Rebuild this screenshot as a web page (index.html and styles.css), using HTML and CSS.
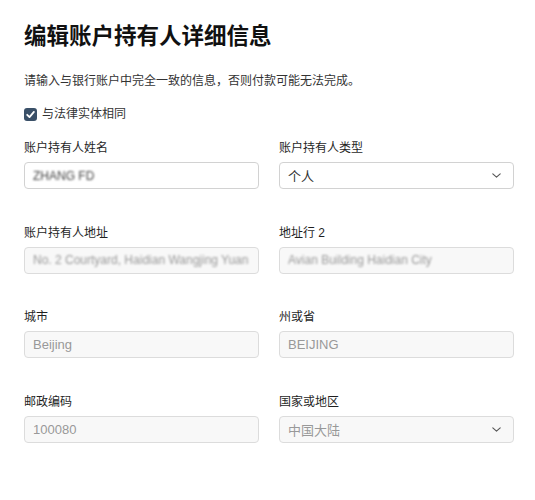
FILE: index.html
```html
<!DOCTYPE html>
<html lang="zh-CN">
<head>
<meta charset="utf-8">
<title>编辑账户持有人详细信息</title>
<link rel="stylesheet" href="styles.css">
</head>
<body>
<main class="page">
  <h1 class="title">编辑账户持有人详细信息</h1>
  <p class="intro">请输入与银行账户中完全一致的信息，否则付款可能无法完成。</p>
  <label class="check">
    <span class="box"><svg viewBox="0 0 13 13" width="13" height="13"><path d="M3.2 6.8 L5.5 9.1 L9.9 3.9" fill="none" stroke="#fff" stroke-width="1.8" stroke-linecap="round" stroke-linejoin="round"/></svg></span>
    <span>与法律实体相同</span>
  </label>
  <div class="grid">
    <div class="field">
      <div class="label">账户持有人姓名</div>
      <div class="input"><span class="blur">ZHANG FD</span></div>
    </div>
    <div class="field">
      <div class="label">账户持有人类型</div>
      <div class="input select"><span>个人</span><svg class="chev" viewBox="0 0 9 5" width="9" height="5"><path d="M0.8 0.8 L4.5 4.2 L8.2 0.8" fill="none" stroke="#555" stroke-width="1.1" stroke-linecap="round" stroke-linejoin="round"/></svg></div>
    </div>
    <div class="field">
      <div class="label">账户持有人地址</div>
      <div class="input disabled"><span class="blur">No. 2 Courtyard, Haidian Wangjing Yuan</span></div>
    </div>
    <div class="field">
      <div class="label">地址行 2</div>
      <div class="input disabled"><span class="blur">Avian Building Haidian City</span></div>
    </div>
    <div class="field">
      <div class="label">城市</div>
      <div class="input disabled"><span>Beijing</span></div>
    </div>
    <div class="field">
      <div class="label">州或省</div>
      <div class="input disabled"><span>BEIJING</span></div>
    </div>
    <div class="field">
      <div class="label">邮政编码</div>
      <div class="input disabled"><span>100080</span></div>
    </div>
    <div class="field">
      <div class="label">国家或地区</div>
      <div class="input disabled select"><span>中国大陆</span><svg class="chev" viewBox="0 0 9 5" width="9" height="5"><path d="M0.8 0.8 L4.5 4.2 L8.2 0.8" fill="none" stroke="#555" stroke-width="1.1" stroke-linecap="round" stroke-linejoin="round"/></svg></div>
    </div>
  </div>
</main>
</body>
</html>
```

FILE: styles.css
```css
html, body {
  margin: 0;
  padding: 0;
  background: #ffffff;
}
body {
  font-family: "Liberation Sans", "Noto Sans CJK SC", sans-serif;
  color: #1f1f1f;
}
.page {
  width: 490px;
  padding: 23px 0 0 24px;
}
.title {
  margin: 0;
  font-family: "Noto Sans CJK SC", sans-serif;
  font-size: 22.5px;
  line-height: 22px;
  font-weight: 700;
  color: #111;
}
.intro {
  margin: 27px 0 0;
  font-size: 12px;
  line-height: 18px;
  color: #333;
}
.check {
  margin-top: 15px;
  display: flex;
  align-items: center;
  gap: 5px;
  font-size: 12px;
  line-height: 18px;
  color: #333;
}
.box {
  width: 13px;
  height: 13px;
  border-radius: 3px;
  background: #3a5068;
  display: flex;
}
.grid {
  margin-top: 16px;
  display: grid;
  grid-template-columns: 1fr 1fr;
  column-gap: 20px;
  row-gap: 34.5px;
}
.label {
  font-size: 12px;
  line-height: 18px;
  margin-bottom: 5px;
  color: #1f1f1f;
}
.input {
  box-sizing: border-box;
  height: 27px;
  border: 1px solid #d2d2d2;
  border-radius: 4px;
  background: #fff;
  padding: 0 8px;
  display: flex;
  align-items: center;
  font-size: 13px;
  color: #333;
  overflow: hidden;
  white-space: nowrap;
}
.input.disabled {
  background: #f8f8f8;
  border-color: #dcdcdc;
  color: #999;
}
.select {
  justify-content: space-between;
  padding-right: 12px;
}
.chev {
  flex: none;
}
.blur {
  filter: blur(1.2px);
  font-size: 12px;
}
.input:not(.disabled) .blur {
  color: #444;
}
.disabled .blur {
  color: #999;
}
```
